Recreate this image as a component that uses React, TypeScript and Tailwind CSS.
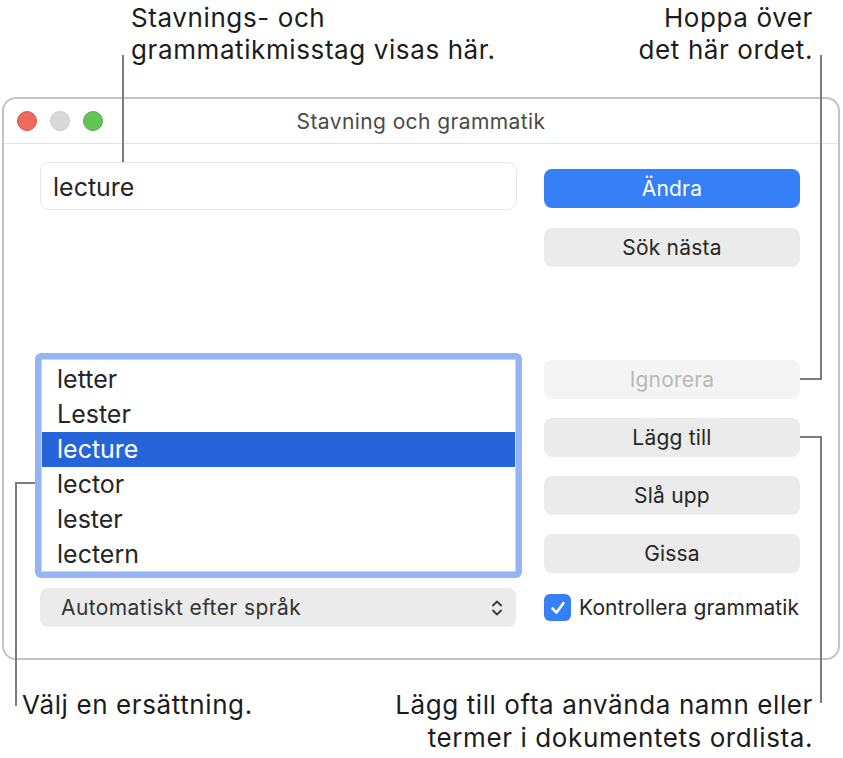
import React from "react";

const font = { fontFamily: "Inter, 'Noto Sans', 'Liberation Sans', sans-serif" };

function Btn({ children, variant = "gray", className = "" }: { children: React.ReactNode; variant?: "blue" | "gray" | "disabled"; className?: string }) {
  const v =
    variant === "blue"
      ? "bg-[#367ff6] text-white"
      : variant === "disabled"
      ? "bg-[#f4f4f4] text-[#b9b9b9]"
      : "bg-[#ebebeb] text-[#262626]";
  return (
    <div className={`h-[39px] w-[256px] rounded-[8px] flex items-center justify-center text-[21px] tracking-[0.2px] ${v} ${className}`}>
      {children}
    </div>
  );
}

export default function App() {
  const items = ["letter", "Lester", "lecture", "lector", "lester", "lectern"];
  return (
    <div className="relative w-[843px] h-[758px] bg-white text-[#1c1c1c] overflow-hidden" style={font}>
      {/* top callouts */}
      <div className="h-[97px] flex justify-between text-[26px] leading-[32px] tracking-[0.6px] pt-[2px]">
        <div className="pl-[131px]">
          <div>Stavnings- och</div>
          <div>grammatikmisstag visas här.</div>
        </div>
        <div className="pr-[30px] text-right">
          <div>Hoppa över</div>
          <div>det här ordet.</div>
        </div>
      </div>

      {/* window */}
      <div className="ml-[2px] w-[838px] h-[563px] border-2 border-[#c4c4c4] rounded-[14px] bg-white">
        <div className="relative h-[45px] border-b border-[#e4e4e4] flex items-center">
          <div className="flex gap-[13px] pl-[13px]">
            <div className="w-[20px] h-[20px] rounded-full bg-[#ec6a5f] border border-[#d6564b]" />
            <div className="w-[20px] h-[20px] rounded-full bg-[#d9d9d9] border border-[#cacaca]" />
            <div className="w-[20px] h-[20px] rounded-full bg-[#62c555] border border-[#52ad46]" />
          </div>
          <div className="absolute inset-0 flex items-center justify-center text-[21px] tracking-[0.4px] text-[#4a4a4a] pt-[2px]">
            Stavning och grammatik
          </div>
        </div>

        <div className="flex pl-[31px]">
          {/* left column */}
          <div className="w-[487px] flex flex-col">
            <div className="mt-[18px] ml-[5px] w-[477px] h-[48px] border border-[#e6e6e6] rounded-[9px] flex items-center pl-[12px] pt-[3px] text-[25px] text-[#262626]">
              lecture
            </div>
            <div className="mt-[143px] h-[225px] rounded-[6px] bg-[#94b4f4] p-[6px]">
              <div className="h-full bg-white border border-[#d4d4d4] pt-[2px]">
                {items.map((w) => (
                  <div
                    key={w}
                    className={`h-[35px] flex items-center pl-[15px] text-[25px] ${
                      w === "lecture" ? "bg-[#2565d9] text-white" : "text-[#262626]"
                    }`}
                  >
                    {w}
                  </div>
                ))}
              </div>
            </div>
            <div className="mt-[10px] ml-[5px] w-[476px] h-[39px] rounded-[8px] bg-[#ebebeb] flex items-center justify-between pl-[21px] pr-[13px] text-[21px] tracking-[0.4px] text-[#333]">
              <span>Automatiskt efter språk</span>
              <svg width="12" height="18" viewBox="0 0 12 18" fill="none" stroke="#3a3a3a" strokeWidth="1.8" strokeLinecap="round" strokeLinejoin="round">
                <path d="M2 6.5 L6 2.5 L10 6.5" />
                <path d="M2 11.5 L6 15.5 L10 11.5" />
              </svg>
            </div>
          </div>

          {/* right column */}
          <div className="ml-[22px] flex flex-col">
            <Btn variant="blue" className="mt-[25px]">Ändra</Btn>
            <Btn className="mt-[20px]">Sök nästa</Btn>
            <Btn variant="disabled" className="mt-[93px]">Ignorera</Btn>
            <Btn className="mt-[19px]">Lägg till</Btn>
            <Btn className="mt-[19px]">Slå upp</Btn>
            <Btn className="mt-[19px]">Gissa</Btn>
            <div className="mt-[21px] flex items-center h-[27px]">
              <div className="w-[27px] h-[27px] rounded-[6px] bg-[#367ff6] flex items-center justify-center">
                <svg width="18" height="18" viewBox="0 0 18 18" fill="none" stroke="white" strokeWidth="2.6" strokeLinecap="round" strokeLinejoin="round">
                  <path d="M3.5 9.5 L7.5 13.5 L14.5 4" />
                </svg>
              </div>
              <span className="ml-[8px] text-[21px] tracking-[0.1px] text-[#262626]">Kontrollera grammatik</span>
            </div>
          </div>
        </div>
      </div>

      {/* bottom callouts */}
      <div className="flex justify-between text-[26px] leading-[33px] tracking-[0.6px] pt-[28px]">
        <div className="pl-[22px]">Välj en ersättning.</div>
        <div className="pr-[30px] text-right">
          <div>Lägg till ofta använda namn eller</div>
          <div>termer i dokumentets ordlista.</div>
        </div>
      </div>

      {/* callout lines */}
      <div className="absolute left-[122px] top-[55px] w-[2px] h-[107px] bg-[#7c7c7c]" />
      <div className="absolute left-[820px] top-[55px] w-[2px] h-[325px] bg-[#7c7c7c]" />
      <div className="absolute left-[800px] top-[378px] w-[22px] h-[2px] bg-[#7c7c7c]" />
      <div className="absolute left-[800px] top-[436px] w-[22px] h-[2px] bg-[#7c7c7c]" />
      <div className="absolute left-[820px] top-[436px] w-[2px] h-[267px] bg-[#7c7c7c]" />
      <div className="absolute left-[15px] top-[482px] w-[20px] h-[2px] bg-[#7c7c7c]" />
      <div className="absolute left-[15px] top-[482px] w-[2px] h-[224px] bg-[#7c7c7c]" />
    </div>
  );
}
